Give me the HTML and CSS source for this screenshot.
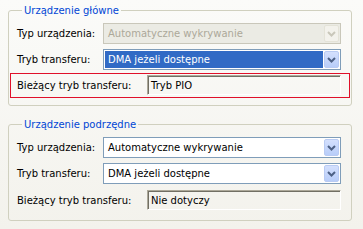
FILE: index.html
```html
<!DOCTYPE html>
<html lang="pl">
<head>
<meta charset="utf-8">
<link rel="stylesheet" href="styles.css">
</head>
<body>
<div class="page">
  <fieldset class="group">
    <legend>Urządzenie główne</legend>
    <div class="row">
      <span class="label">Typ urządzenia:</span>
      <div class="combo disabled">
        <span class="val">Automatyczne wykrywanie</span>
        <span class="btn"><svg width="9" height="6" viewBox="0 0 9 6"><path d="M1 1 L4.5 4.5 L8 1" fill="none" stroke="currentColor" stroke-width="2"/></svg></span>
      </div>
    </div>
    <div class="row">
      <span class="label">Tryb transferu:</span>
      <div class="combo">
        <span class="val sel">DMA jeżeli dostępne</span>
        <span class="btn"><svg width="9" height="6" viewBox="0 0 9 6"><path d="M1 1 L4.5 4.5 L8 1" fill="none" stroke="currentColor" stroke-width="2"/></svg></span>
      </div>
    </div>
    <div class="current marked">
      <span class="label">Bieżący tryb transferu:</span>
      <div class="field">Tryb PIO</div>
    </div>
  </fieldset>

  <fieldset class="group second">
    <legend>Urządzenie podrzędne</legend>
    <div class="row">
      <span class="label">Typ urządzenia:</span>
      <div class="combo">
        <span class="val">Automatyczne wykrywanie</span>
        <span class="btn"><svg width="9" height="6" viewBox="0 0 9 6"><path d="M1 1 L4.5 4.5 L8 1" fill="none" stroke="currentColor" stroke-width="2"/></svg></span>
      </div>
    </div>
    <div class="row">
      <span class="label">Tryb transferu:</span>
      <div class="combo">
        <span class="val">DMA jeżeli dostępne</span>
        <span class="btn"><svg width="9" height="6" viewBox="0 0 9 6"><path d="M1 1 L4.5 4.5 L8 1" fill="none" stroke="currentColor" stroke-width="2"/></svg></span>
      </div>
    </div>
    <div class="current plain">
      <span class="label">Bieżący tryb transferu:</span>
      <div class="field">Nie dotyczy</div>
    </div>
  </fieldset>
</div>
</body>
</html>
```
FILE: styles.css
```css
html, body {
  margin: 0;
  padding: 0;
}
body {
  width: 363px;
  height: 229px;
  overflow: hidden;
  background: linear-gradient(#fbfbf9, #f3f2ec);
  font-family: "DejaVu Sans", Tahoma, sans-serif;
  font-size: 10px;
  color: #000;
}
.page {
  padding: 4px 0 0 8px;
}
.group {
  width: 344px;
  box-sizing: border-box;
  margin: 0;
  padding: 6px 10px 7px 8px;
  border: 1px solid #d0d0bf;
  border-radius: 3px;
  min-width: 0;
}
.group.second {
  margin-top: 12px;
}
.group legend {
  color: #0046d5;
  padding: 0 2px;
  margin-left: 5px;
  line-height: 13px;
}
.row {
  display: grid;
  grid-template-columns: 86px 1fr;
  align-items: center;
  height: 21px;
  margin-bottom: 5px;
}
.current {
  display: grid;
  grid-template-columns: 130px 1fr;
  align-items: center;
  height: 20px;
  margin: 0 -9px 0 -7px;
}
.current.marked {
  margin-top: -2px;
  padding: 2px 9px 3px 7px;
  box-shadow: inset 0 0 0 1px #e0102a;
}
.current.plain {
  margin-top: 0;
  padding: 1px 9px 3px 7px;
}
.label {
  white-space: nowrap;
}
.combo {
  height: 21px;
  box-sizing: border-box;
  border: 1px solid #7f9db9;
  background: #fff;
  display: flex;
  align-items: stretch;
  padding: 1px;
}
.combo .val {
  flex: 1;
  display: flex;
  align-items: center;
  padding-left: 3px;
  margin-right: 1px;
  white-space: nowrap;
}
.combo .val.sel {
  background: #316ac5;
  color: #fff;
}
.combo .btn {
  width: 15px;
  box-sizing: border-box;
  border: 1px solid #b9cbf3;
  border-radius: 2px;
  background: linear-gradient(#d4e0fd, #b8cdf9);
  color: #4d6185;
  display: flex;
  align-items: center;
  justify-content: center;
}
.combo.disabled {
  border-color: #c9c7ba;
  background: #ebebe4;
  color: #aca899;
}
.combo.disabled .btn {
  border-color: #e4e3d8;
  background: #f3f2ec;
  color: #c9c7ba;
}
.field {
  height: 20px;
  box-sizing: border-box;
  border-top: 1px solid #aca899;
  border-left: 1px solid #aca899;
  border-right: 1px solid #fff;
  border-bottom: 1px solid #fff;
  box-shadow: inset 1px 1px 0 #716f64;
  padding-left: 3px;
  display: flex;
  align-items: center;
  white-space: nowrap;
}
```
